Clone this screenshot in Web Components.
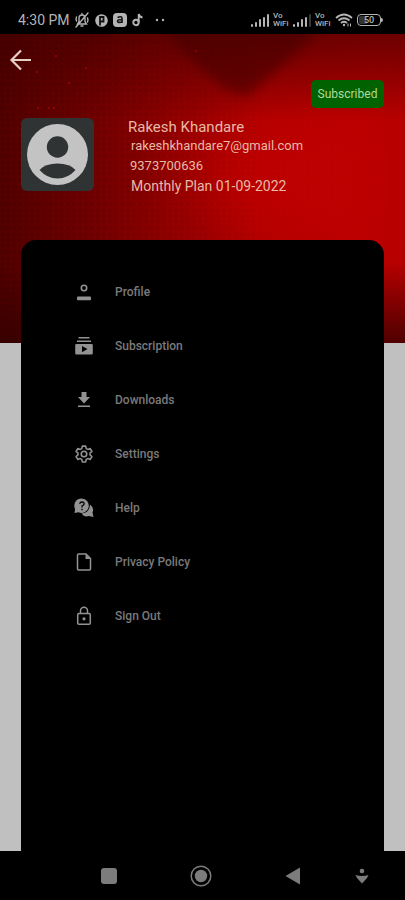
<!DOCTYPE html>
<html lang="en">
<head>
<meta charset="utf-8">
<meta name="viewport" content="width=device-width, initial-scale=1">
<title>Account</title>
<style>
body { margin: 0; background: #000; font-family: Roboto, "Liberation Sans", sans-serif; }
</style>
</head>
<body>
<account-screen></account-screen>
<script>
const define = (name, html) => {
  const template = document.createElement('template');
  template.innerHTML = html;
  customElements.define(name, class extends HTMLElement {
    constructor() {
      super();
      this.attachShadow({ mode: 'open' }).append(template.content.cloneNode(true));
    }
  });
};

define('signal-bars', `
<style>
:host { display: block; width: 18px; height: 13px; }
svg { display: block; }
.last { opacity: var(--last-bar, 1); }
</style>
<svg width="18" height="13" fill="#b4b4b4" aria-hidden="true">
  <rect x="0" y="10" width="2" height="3" rx="1"/><rect x="4" y="8" width="2" height="5" rx="1"/>
  <rect x="8" y="5" width="2" height="8" rx="1"/><rect x="12" y="3" width="2" height="10" rx="1"/>
  <rect class="last" x="16" y="0" width="2" height="13" rx="1"/>
</svg>`);

define('wifi-call', `
<style>
:host { display: block; width: 16px; font-size: 8px; line-height: 8px; font-weight: 500; color: #b4b4b4; }
span { display: block; }
</style>
<span>Vo</span><span>WiFi</span>`);

define('status-bar', `
<style>
:host { display: flex; align-items: center; justify-content: space-between; height: 34px; box-sizing: border-box; padding: 6px 22px 0 18px; background: #000; color: #b4b4b4; }
.group { display: flex; align-items: center; }
time { font-size: 14px; line-height: 16px; margin-right: 4px; white-space: nowrap; }
svg { display: block; flex: none; }
.notices { gap: 5px; }
.signals { gap: 4px; }
.weak { --last-bar: .3; }
.battery { display: flex; align-items: center; }
.cell { width: 24px; height: 12px; box-sizing: border-box; border: 1px solid #b4b4b4; border-radius: 4px; background: linear-gradient(90deg, #333 40%, transparent 40%) content-box; padding: 1px; font-size: 9px; line-height: 8px; font-weight: 500; text-align: center; }
.tip { width: 2px; height: 4px; background: #b4b4b4; border-radius: 0 2px 2px 0; }
</style>
<div class="group">
  <time>4:30 PM</time>
  <div class="group notices">
    <svg width="16" height="16" viewBox="0 0 16 16" fill="none" stroke="#b4b4b4" stroke-width="1.4" stroke-linecap="round"><path d="M3.500 12h9L11 9.500V6.500Q11 3 8 3T5 6.500V9.500ZM7 14h2M8 1.500V3M14 1 2 15M2.500 5q-1 2 0 4M13.500 6q1 2 0 4"/></svg>
    <svg width="13" height="13" viewBox="0 0 13 13"><circle cx="6.500" cy="6.500" r="6.300" fill="#b4b4b4"/><path d="M5 11.500V3H8.500V7.500H5.500" fill="none" stroke="#111" stroke-width="1.800"/></svg>
    <svg width="14" height="14" viewBox="0 0 14 14"><rect width="14" height="14" rx="4" fill="#b4b4b4"/><path d="M4.500 4.500Q9 2.500 9 5.500V10M9 6.500Q4.500 6.500 4.500 8.300T9 9" fill="none" stroke="#111" stroke-width="1.600"/></svg>
    <svg width="12" height="14" viewBox="0 0 12 14" fill="none" stroke="#b4b4b4" stroke-width="1.900"><circle cx="4" cy="9.500" r="2.700"/><path d="M6.700 9.500V1Q7.300 4 10.500 4.500"/></svg>
    <svg width="20" height="4" viewBox="0 0 20 4" fill="#b4b4b4"><circle cx="8" cy="2" r="1.200"/><circle cx="14" cy="2" r="1.200"/></svg>
  </div>
</div>
<div class="group signals">
  <signal-bars></signal-bars><wifi-call></wifi-call>
  <signal-bars class="weak"></signal-bars><wifi-call></wifi-call>
  <svg width="18" height="14" viewBox="0 0 18 14" fill="none" stroke="#b4b4b4" stroke-width="1.700"><path d="M1 5Q9-2 17 5M3.500 7.500Q9 3 14.500 7.500M6 10Q9 7.500 12 10"/><circle cx="9" cy="12" r="1.200" fill="#b4b4b4" stroke="none"/><path d="M13 10.500v3M15.500 10.500v3" stroke-width="1"/></svg>
  <div class="battery"><div class="cell">50</div><div class="tip"></div></div>
</div>`);

define('user-summary', `
<style>
:host { display: flex; align-items: flex-start; gap: 34px; color: #e8b9a6; }
.avatar { flex: none; display: block; }
.lines { min-width: 0; white-space: nowrap; }
::slotted(*) { display: block; margin: 0; font-weight: 400; }
::slotted([slot=name]) { font-size: 15px; line-height: 18px; }
::slotted([slot=email]), ::slotted([slot=phone]) { font-size: 13px; line-height: 20px; }
::slotted([slot=plan]) { font-size: 14px; line-height: 20px; }
.indent { padding-left: 3px; }
.phone { padding-left: 2px; }
</style>
<svg class="avatar" width="73" height="73" viewBox="0 0 73 73" role="img" aria-label="Profile picture">
  <rect width="73" height="73" rx="6" fill="#303333"/>
  <circle cx="36.500" cy="36.500" r="30.500" fill="#c3c3c3"/>
  <circle cx="36.500" cy="29" r="10.700" fill="#303333"/>
  <path d="M18.500 52Q24 45.500 36.500 45.500T54.500 52Q47 60.500 36.500 60.500T18.500 52Z" fill="#303333"/>
</svg>
<div class="lines">
  <slot name="name"></slot>
  <div class="indent"><slot name="email"></slot></div>
  <div class="phone"><slot name="phone"></slot></div>
  <div class="indent"><slot name="plan"></slot></div>
</div>`);

define('menu-item', `
<style>
:host { display: block; }
a { display: flex; align-items: center; gap: 21px; height: 54px; padding-left: 53px; color: #7a7a7a; text-decoration: none; font-size: 12px; line-height: 16px; font-weight: 500; }
.icon { width: 20px; height: 20px; flex: none; color: #929292; }
::slotted(svg) { display: block; width: 20px; height: 20px; }
</style>
<a href="#"><span class="icon"><slot name="icon"></slot></span><slot></slot></a>`);

define('system-nav', `
<style>
:host { display: grid; grid-template-columns: 62fr 93fr 92fr 92fr 46fr 20fr; align-items: center; height: 49px; background: #000; }
button { display: grid; place-items: center; height: 40px; padding: 0; border: 0; background: none; }
button:first-of-type { grid-column: 2; }
svg { display: block; }
</style>
<button aria-label="Recent apps"><svg width="16" height="16"><rect width="16" height="16" rx="3" fill="#7c7c7c"/></svg></button>
<button aria-label="Home"><svg width="22" height="22"><circle cx="11" cy="11" r="9.800" fill="none" stroke="#7c7c7c" stroke-width="1.500"/><circle cx="11" cy="11" r="6.200" fill="#7c7c7c"/></svg></button>
<button aria-label="Back"><svg width="16" height="18"><path d="M.500 9 15 .500V17.500Z" fill="#7c7c7c"/></svg></button>
<button aria-label="Hide navigation"><svg width="14" height="16"><circle cx="7" cy="3" r="2.300" fill="#7c7c7c"/><path d="M.500 7Q7 9 13.500 7L12 10 7 15.500 2 10Z" fill="#7c7c7c"/></svg></button>`);

define('account-screen', `
<style>
:host { display: flex; flex-direction: column; min-height: 100vh; }
main { flex: 1; display: grid; grid-template-rows: 206px 103px 1fr; background: #c0c0c0; }
.backdrop { grid-area: 1 / 1 / 3 / 2; width: 100%; height: 100%; }
header { grid-area: 1 / 1 / 2 / 2; z-index: 1; box-sizing: border-box; padding: 13px 21px 0; display: flex; flex-direction: column; }
.back { align-self: flex-start; margin-left: -12px; width: 24px; height: 26px; padding: 0; border: 0; background: none; }
svg { display: block; }
.badge { align-self: flex-end; margin-top: 7px; height: 28px; width: 73px; border-radius: 5px; background: #006200; color: #b3d89b; font-size: 12px; line-height: 29px; text-align: center; }
user-summary { margin-top: 10px; }
nav { grid-area: 2 / 1 / 4 / 2; z-index: 1; margin: 0 21px; background: #000; border-radius: 15px 15px 0 0; padding: 25px 0 40px; }
</style>
<status-bar></status-bar>
<main>
  <svg class="backdrop" viewBox="0 0 405 309" preserveAspectRatio="none" aria-hidden="true">
    <defs>
      <linearGradient id="base"><stop offset="0" stop-color="#520000"/><stop offset=".2" stop-color="#6c0000"/><stop offset=".42" stop-color="#900000"/><stop offset=".65" stop-color="#ac0000"/><stop offset="1" stop-color="#b00000"/></linearGradient>
      <linearGradient id="foot" x2="0" y2="1"><stop offset=".74" stop-color="#300000" stop-opacity="0"/><stop offset="1" stop-color="#300000" stop-opacity=".75"/></linearGradient>
      <linearGradient id="top" x2="0" y2="1"><stop offset="0" stop-color="#400000" stop-opacity=".6"/><stop offset=".28" stop-color="#400000" stop-opacity="0"/></linearGradient>
      <linearGradient id="fade"><stop offset="0" stop-color="#fff"/><stop offset=".7" stop-color="#fff" stop-opacity=".15"/><stop offset="1" stop-color="#fff" stop-opacity="0"/></linearGradient>
      <pattern id="dots" width="6" height="6" patternUnits="userSpaceOnUse"><circle cx="2" cy="2" r="1" fill="#200000" opacity=".35"/></pattern>
      <mask id="left"><rect width="405" height="309" fill="url(#fade)"/></mask>
      <filter id="soft" x="-30%" y="-30%" width="160%" height="160%"><feGaussianBlur stdDeviation="6"/></filter>
      <filter id="wide" x="-50%" y="-50%" width="200%" height="200%"><feGaussianBlur stdDeviation="28"/></filter>
    </defs>
    <rect width="405" height="309" fill="url(#base)"/>
    <path d="M270 70 405 40V260L260 210 190 130Z" fill="#bd0000" filter="url(#wide)"/>
    <path d="M150-20H335L300 15 247 62 225 55 190 25Z" fill="#500000" opacity=".65" filter="url(#soft)"/>
    <rect width="405" height="309" fill="url(#top)"/>
    <rect width="405" height="309" fill="url(#foot)"/>
    <rect width="405" height="309" fill="url(#dots)" mask="url(#left)"/>
    <g fill="#a80000"><circle cx="38" cy="74" r="1"/><circle cx="49" cy="74" r="1"/><circle cx="54" cy="74" r="1"/><circle cx="196" cy="17" r="1"/><circle cx="69" cy="49" r="1"/><circle cx="56" cy="22" r="1"/><circle cx="86" cy="34" r="1"/><circle cx="37" cy="38" r="1"/></g>
  </svg>
  <header>
    <button class="back" aria-label="Back"><svg width="24" height="26" viewBox="0 0 24 26" fill="none" stroke="#e6cfc4" stroke-width="2.200"><path d="M22 13H3M12 3.500 2.500 13 12 22.500"/></svg></button>
    <div class="badge">Subscribed</div>
    <user-summary>
      <h1 slot="name">Rakesh Khandare</h1>
      <span slot="email">rakeshkhandare7@gmail.com</span>
      <span slot="phone">9373700636</span>
      <span slot="plan">Monthly Plan 01-09-2022</span>
    </user-summary>
  </header>
  <nav aria-label="Account">
    <menu-item><svg slot="icon" viewBox="0 0 20 20"><circle cx="10" cy="6" r="2.700" fill="none" stroke="currentColor" stroke-width="1.600"/><rect x="3" y="14.500" width="14" height="3.700" rx="1" fill="currentColor"/></svg>Profile</menu-item>
    <menu-item><svg slot="icon" viewBox="0 0 20 20" fill="currentColor"><path d="M4.500 1h11v1.500h-11ZM3 4.500h14V6H3Z"/><path fill-rule="evenodd" d="M2.500 8h15q1.300 0 1.300 1.300v8q0 1.200-1.300 1.200h-15q-1.300 0-1.300-1.200v-8Q1.200 8 2.500 8ZM8 10v6.200l5.500-3.100Z"/></svg>Subscription</menu-item>
    <menu-item><svg slot="icon" viewBox="0 0 20 20" fill="currentColor"><path d="M7.500 2h5v5H16l-6 6.500L4 7h3.500ZM4 15.500h12V17H4Z"/></svg>Downloads</menu-item>
    <menu-item><svg slot="icon" viewBox="0 0 24 24" fill="none" stroke="currentColor" stroke-width="1.900" stroke-linejoin="round"><path d="M10 2.500h4l.7 3 1.800 1 3-1 2 3.500-2.300 2v2l2.300 2-2 3.500-3-1-1.800 1-.7 3h-4l-.7-3-1.800-1-3 1-2-3.500 2.300-2v-2l-2.300-2 2-3.500 3 1 1.800-1Z"/><circle cx="12" cy="12" r="3.300"/></svg>Settings</menu-item>
    <menu-item><svg slot="icon" viewBox="0 0 20 20"><path d="M16 6.500q4.500 3.500 2.500 8l1 4.500-4.500-1q-5 1.500-7.500-2.500Q15.500 15 16 6.500Z" fill="currentColor"/><path d="M7.700.500a7.200 7.200 0 1 1-3.200 13.700L.500 15l.600-4A7.200 7.200 0 0 1 7.700.500Z" fill="currentColor"/><path d="M5.700 5.800Q6 4 8 4t2.200 1.800Q10.200 7 8 8v1.500M8 10.700v1.500" fill="none" stroke="#000" stroke-width="1.300"/></svg>Help</menu-item>
    <menu-item><svg slot="icon" viewBox="0 0 20 20"><path d="M4.500 2H12l4.500 4.500V17q0 1-1 1h-11q-1 0-1-1V3q0-1 1-1Z" fill="none" stroke="currentColor" stroke-width="1.500"/><path d="M11.500 2v5h5Z" fill="currentColor"/></svg>Privacy Policy</menu-item>
    <menu-item><svg slot="icon" viewBox="0 0 20 20" fill="none" stroke="currentColor" stroke-width="1.500"><rect x="3.700" y="7.500" width="12.600" height="10.700" rx="1.200"/><path d="M6.500 7.500V4.800a3.500 3.500 0 0 1 7 0V7.500"/><circle cx="10" cy="12.800" r="1.600" fill="currentColor" stroke="none"/></svg>Sign Out</menu-item>
  </nav>
</main>
<system-nav></system-nav>`);
</script>
</body>
</html>
